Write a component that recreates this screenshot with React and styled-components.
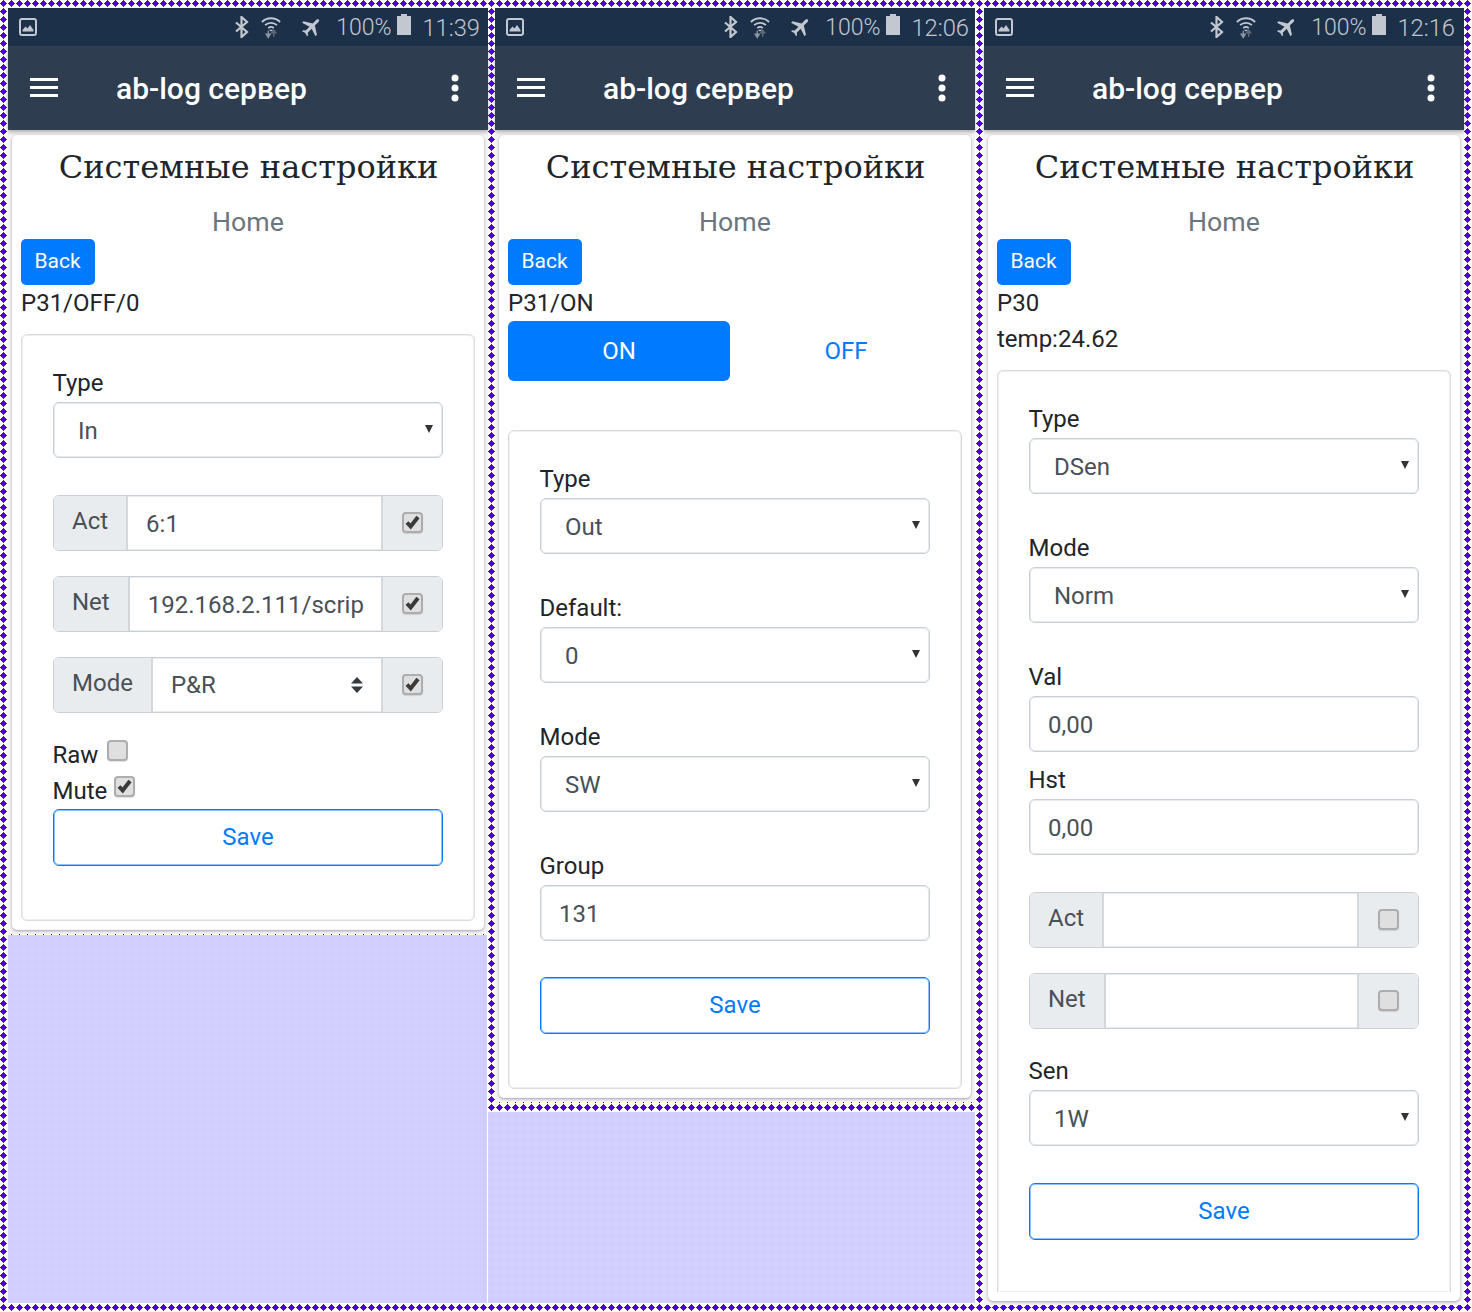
import React from "react";
import styled, { createGlobalStyle } from "styled-components";

const diamond = (color, bg) =>
  `url("data:image/svg+xml,${encodeURIComponent(
    `<svg xmlns='http://www.w3.org/2000/svg' width='8' height='8' shape-rendering='crispEdges'><rect width='8' height='8' fill='${bg}'/><g fill='${color}'><rect x='3' y='0' width='1' height='7'/><rect x='2' y='1' width='3' height='5'/><rect x='1' y='2' width='5' height='3'/><rect x='0' y='3' width='7' height='1'/></g></svg>`
  )}")`;

const Global = createGlobalStyle`
  html, body { margin: 0; padding: 0; }
  body { font-family: Roboto, "Liberation Sans", sans-serif; color: #212529; background: #fff; }
  * { box-sizing: border-box; }
`;

const Page = styled.div`
  width: 1472px;
  height: 1312px;
  padding: 8px;
  display: flex;
  align-items: stretch;
  overflow: hidden;
  background: #fff ${diamond("#4a00ff", "#ffffff")} 0 0 / 8px 8px repeat;
`;
const Column = styled.div`
  width: 480px;
  flex: none;
  margin-left: ${(p) => p.$offset || 0}px;
  display: flex;
  flex-direction: column;
`;
const Panel = styled.div`
  background: #f5f5f5;
  display: flex;
  flex-direction: column;
  flex: ${(p) => (p.$fill ? 1 : "none")};
`;
const Filler = styled.div`
  flex: 1;
  margin: ${(p) => p.$top}px ${(p) => p.$right}px 1px ${(p) => p.$left}px;
  background: ${diamond("#d0ccfd", "#d3cfff")} 0 0 / 8px 8px repeat;
`;
const StatusBar = styled.div`
  height: 38px;
  background: #1c3149;
  color: #c3c8d0;
  display: flex;
  align-items: center;
  padding: 0 ${(p) => p.$right}px 0 11px;
  font-weight: 300;
  font-size: 23px;
`;
const StatusRight = styled.div`
  margin-left: auto;
  display: flex;
  align-items: center;
`;
const StatusIcon = styled.svg`
  display: block;
  flex: none;
  margin-left: ${(p) => p.$gap || 0}px;
  margin-top: ${(p) => p.$lift || 0}px;
`;
const StatusText = styled.span`
  margin-left: ${(p) => p.$gap}px;
  padding-top: 2px;
  font-size: ${(p) => p.$size}px;
  line-height: 36px;
  white-space: nowrap;
`;
const AppBar = styled.div`
  height: 84px;
  background: #2e3e50;
  color: #fff;
  display: flex;
  align-items: center;
  padding: 0 29px 0 22px;
  box-shadow: 0 2px 4px rgba(0, 0, 0, 0.3);
  position: relative;
`;
const AppTitle = styled.div`
  margin-left: 57px;
  font-size: 30px;
  font-weight: 500;
  flex: 1;
`;
const Card = styled.div`
  margin: 5px 4px 4px;
  background: #fff;
  border-radius: 5px;
  padding: 0 9px 9px;
  box-shadow: 0 1px 3px rgba(0, 0, 0, 0.35);
`;
const Title = styled.h2`
  margin: 0 0 5px;
  height: 64px;
  line-height: 64px;
  padding-left: 1px;
  text-align: center;
  font-family: "DejaVu Serif", serif;
  font-weight: 400;
  font-size: 32px;
  white-space: nowrap;
  color: #212529;
`;
const Home = styled.div`
  height: 35px;
  line-height: 37px;
  text-align: center;
  font-size: 26.7px;
  color: #6c757d;
`;
const BackButton = styled.button`
  display: block;
  width: 74px;
  height: 46px;
  border: none;
  border-radius: 5px;
  background: #007bff;
  color: #fff;
  font: 400 21px Roboto, sans-serif;
  padding: 0 1px 2px 0;
`;
const Line = styled.div`
  height: 36px;
  line-height: 36px;
  font-size: 24px;
`;
const Toggle = styled.div`
  display: grid;
  grid-template-columns: 222px 1fr;
  height: 60px;
  margin-bottom: 49px;
`;
const ToggleItem = styled.div`
  border-radius: 6px;
  display: flex;
  align-items: center;
  justify-content: center;
  font-size: 24px;
  background: ${(p) => (p.$active ? "#007bff" : "transparent")};
  color: ${(p) => (p.$active ? "#fff" : "#007bff")};
`;
const Inner = styled.div`
  margin-top: ${(p) => p.$top}px;
  border: 1px solid #dcdcdc;
  border-bottom: ${(p) => (p.$open ? "none" : "1px solid #dcdcdc")};
  box-shadow: inset 0 0 0 1px #efefef;
  border-radius: ${(p) => (p.$open ? "6px 6px 0 0" : "6px")};
  padding: 31px 31px ${(p) => (p.$open ? 52 : 54)}px;
`;
const Label = styled.div`
  height: 36px;
  line-height: 34px;
  font-size: 24px;
  margin: ${(p) => p.$top || 0}px 0 0 -0.5px;
`;
const Control = styled.div`
  position: relative;
  height: 56px;
  border: 1px solid #c9cfd5;
  box-shadow: inset 0 0 0 1px #e8ebee;
  border-radius: 6px;
  background: #fff;
  color: #495057;
  font-size: 24px;
  display: flex;
  align-items: center;
  padding: 2px 0 0 ${(p) => (p.$select ? 24 : 18)}px;
  margin-top: ${(p) => p.$top || 0}px;
`;
const Caret = styled.span`
  position: absolute;
  right: 9px;
  top: 22px;
  width: 0;
  height: 0;
  border-left: 4.5px solid transparent;
  border-right: 4.5px solid transparent;
  border-top: 8px solid #333;
`;
const Group = styled.div`
  display: flex;
  height: 56px;
  border: 1px solid #c9cfd5;
  border-radius: 6px;
  overflow: hidden;
  margin-top: ${(p) => p.$top}px;
  font-size: 24px;
  color: #495057;
`;
const Addon = styled.div`
  flex: none;
  background: #e9ecef;
  padding: 0 18px 4px 18px;
  display: flex;
  align-items: center;
  border-right: 2px solid #d3d8dd;
`;
const GroupValue = styled.div`
  flex: 1;
  min-width: 0;
  padding: ${(p) => (p.$compact ? "0 18px 0 18px" : "2px 16px 0 18px")};
  display: flex;
  align-items: center;
  justify-content: space-between;
  white-space: nowrap;
  overflow: hidden;
  box-shadow: inset 0 1px 0 #e8ebee, inset 0 -1px 0 #e8ebee;
`;
const CheckAddon = styled.div`
  flex: none;
  width: 61px;
  background: #e9ecef;
  border-left: 2px solid #d3d8dd;
  display: flex;
  align-items: center;
  justify-content: center;
  padding-bottom: 1px;
`;
const Box = styled.span`
  display: block;
  flex: none;
  width: 21px;
  height: 21px;
  border: 2px solid #adadad;
  border-radius: 4px;
  background: #dfdfdf;
  box-shadow: 0 1px 1px rgba(0, 0, 0, 0.12);
  position: relative;
`;
const CheckRow = styled.div`
  display: flex;
  height: 36px;
  line-height: 36px;
  font-size: 24px;
  gap: ${(p) => p.$gap}px;
  margin: ${(p) => p.$top || 0}px 0 0 -0.5px;
`;
const RowBox = styled.div`
  padding-top: 3px;
`;
const Save = styled.button`
  display: block;
  width: 100%;
  height: 57px;
  margin-top: ${(p) => p.$top || 0}px;
  padding: 0 0 2px;
  border: 1px solid #007bff;
  box-shadow: inset 0 0 0 1px rgba(0, 123, 255, 0.45);
  border-radius: 6px;
  background: #fff;
  color: #007bff;
  font: 400 24px Roboto, sans-serif;
`;

const Check = ({ on }) => (
  <Box>
    {on && (
      <svg width="17" height="17" viewBox="0 0 17 17" style={{ display: "block" }}>
        <path d="M3 8.500l3.700 4 7.300-9.500" fill="none" stroke="#3a3a3a" strokeWidth="4" />
      </svg>
    )}
  </Box>
);

const Updown = () => (
  <svg width="12" height="16" viewBox="0 0 12 16">
    <path d="M6 0l6 6.500H0zM6 16l6-6.500H0z" fill="#343a40" />
  </svg>
);

const Status = ({ time, right }) => (
  <StatusBar $right={right}>
    <StatusIcon $lift={-1} width="18" height="18" viewBox="0 0 18 18">
      <rect x="1" y="1" width="16" height="16" rx="2" fill="none" stroke="#c3c8d0" strokeWidth="2" />
      <path d="M3.500 13.500v-1.500l3-3.500 2 2 2.500-3.500 3.500 5v1.500z" fill="#c3c8d0" />
    </StatusIcon>
    <StatusRight>
      <StatusIcon $lift={-1} width="14" height="22" viewBox="0 0 14 22">
        <path d="M1 6.500l11 9.500-5.500 5V1l5.500 5L1 15.500" fill="none" stroke="#c3c8d0" strokeWidth="2.200" />
      </StatusIcon>
      <StatusIcon $gap={12} $lift={-1} width="20" height="24" viewBox="0 0 22 24">
        <g fill="none" stroke="#c3c8d0" strokeWidth="2">
          <path d="M1 6.500C6.500 1 15.500 1 21 6.500" />
          <path d="M4.500 10C8 6.500 14 6.500 17.500 10" />
          <path d="M8 13.200c1.700-1.500 4.300-1.500 6 0" />
        </g>
        <path d="M11 17l-2.500-2h5z" fill="#c3c8d0" />
        <path d="M8 16v5M5.800 20l2.200 3.500 2.200-3.500z" stroke="#8d95a1" strokeWidth="1.500" fill="#8d95a1" />
        <path d="M14 23v-5M11.800 18.500l2.200-3 2.200 3z" stroke="#5f6b7b" strokeWidth="1.500" fill="#5f6b7b" />
      </StatusIcon>
      <StatusIcon $gap={19} $lift={-1} width="24" height="24" viewBox="0 0 24 24">
        <g transform="rotate(45 12 12)">
          <path d="M21 16v-2l-8-5V3.500c0-.83-.67-1.500-1.500-1.500S10 2.670 10 3.500V9l-8 5v2l8-2.500V19l-2 1.500V22l3.500-1 3.500 1v-1.500L13 19v-5.500l8 2.500z" fill="#c3c8d0" />
        </g>
      </StatusIcon>
      <StatusText $gap={12} $size={23}>100%</StatusText>
      <StatusIcon $gap={6} $lift={-6} width="14" height="21" viewBox="0 0 14 21">
        <path d="M4 0h6v2h4v19H0V2h4z" fill="#c3c8d0" />
      </StatusIcon>
      <StatusText $gap={11} $size={23.7}>{time}</StatusText>
    </StatusRight>
  </StatusBar>
);

const Bar = () => (
  <AppBar>
    <svg width="29" height="22" viewBox="0 0 29 22">
      <path d="M0 2.500h28M0 10.500h28M0 18.500h28" stroke="#fff" strokeWidth="3" />
    </svg>
    <AppTitle>ab-log сервер</AppTitle>
    <svg width="8" height="28" viewBox="0 0 8 28">
      <circle cx="4" cy="4" r="3.500" fill="#fff" />
      <circle cx="4" cy="14" r="3.500" fill="#fff" />
      <circle cx="4" cy="24" r="3.500" fill="#fff" />
    </svg>
  </AppBar>
);

const Head = () => (
  <>
    <Title>Системные настройки</Title>
    <Home>Home</Home>
    <BackButton>Back</BackButton>
  </>
);

const SelectField = ({ label, value, top }) => (
  <>
    <Label $top={top}>{label}</Label>
    <Control $select>
      {value}
      <Caret />
    </Control>
  </>
);
const InputField = ({ label, value, top }) => (
  <>
    <Label $top={top}>{label}</Label>
    <Control>{value}</Control>
  </>
);
const CheckGroup = ({ label, value, on, top, updown }) => (
  <Group $top={top}>
    <Addon>{label}</Addon>
    <GroupValue $compact={updown}>
      <span>{value}</span>
      {updown && <Updown />}
    </GroupValue>
    <CheckAddon>
      <Check on={on} />
    </CheckAddon>
  </Group>
);

export default function App() {
  return (
    <Page>
      <Global />
      <Column>
        <Panel>
          <Status time="11:39" right={8} />
          <Bar />
          <Card>
            <Head />
            <Line>P31/OFF/0</Line>
            <Inner $top={13}>
              <SelectField label="Type" value="In" />
              <CheckGroup top={37} label="Act" value="6:1" on />
              <CheckGroup top={25} label="Net" value="192.168.2.111/scrip" on />
              <CheckGroup top={25} label="Mode" value="P&R" on updown />
              <CheckRow $top={24} $gap={9}>
                Raw
                <RowBox>
                  <Check />
                </RowBox>
              </CheckRow>
              <CheckRow $gap={7}>
                Mute
                <RowBox>
                  <Check on />
                </RowBox>
              </CheckRow>
              <Save>Save</Save>
            </Inner>
          </Card>
        </Panel>
        <Filler $top={1} $right={1} $left={0} />
      </Column>
      <Column $offset={7}>
        <Panel>
          <Status time="12:06" right={6} />
          <Bar />
          <Card>
            <Head />
            <Line>P31/ON</Line>
            <Toggle>
              <ToggleItem $active>ON</ToggleItem>
              <ToggleItem>OFF</ToggleItem>
            </Toggle>
            <Inner $top={0}>
              <SelectField label="Type" value="Out" />
              <SelectField top={37} label="Default:" value="0" />
              <SelectField top={37} label="Mode" value="SW" />
              <InputField top={37} label="Group" value="131" />
              <Save $top={36}>Save</Save>
            </Inner>
          </Card>
        </Panel>
        <Filler $top={10} $right={0} $left={-7} />
      </Column>
      <Column $offset={9}>
        <Panel $fill>
          <Status time="12:16" right={9} />
          <Bar />
          <Card>
            <Head />
            <Line>P30</Line>
            <Line>temp:24.62</Line>
            <Inner $top={13} $open>
              <SelectField label="Type" value="DSen" />
              <SelectField top={37} label="Mode" value="Norm" />
              <InputField top={37} label="Val" value="0,00" />
              <InputField top={11} label="Hst" value="0,00" />
              <CheckGroup top={37} label="Act" value="" />
              <CheckGroup top={25} label="Net" value="" />
              <SelectField top={25} label="Sen" value="1W" />
              <Save $top={37}>Save</Save>
            </Inner>
          </Card>
        </Panel>
      </Column>
    </Page>
  );
}
